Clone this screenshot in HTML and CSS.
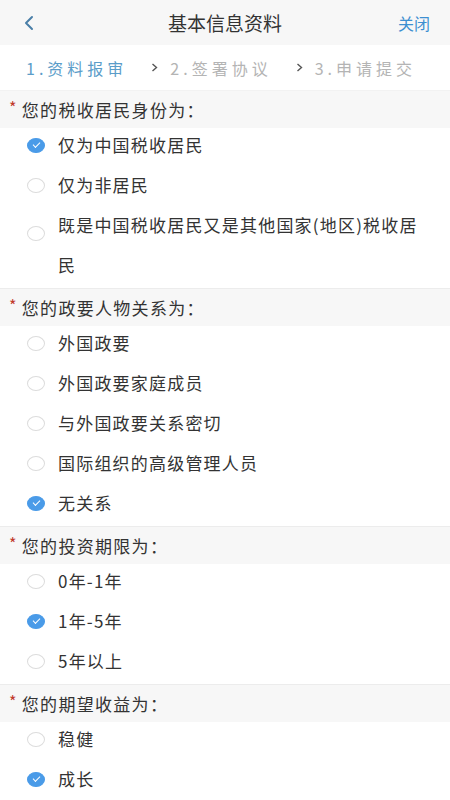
FILE: index.html
```html
<!DOCTYPE html>
<html lang="zh">
<head>
<meta charset="utf-8">
<link rel="stylesheet" href="styles.css">
</head>
<body>
<div class="nav">
  <svg class="back" width="12" height="16" viewBox="0 0 12 16"><path d="M9 2 L3 8 L9 14" fill="none" stroke="#4a7fa8" stroke-width="2" stroke-linecap="round" stroke-linejoin="round"/></svg>
  <div class="title">基本信息资料</div>
  <div class="close">关闭</div>
</div>
<div class="steps">
  <span class="step active">1.资料报审</span>
  <svg class="arrow" width="7" height="9" viewBox="0 0 7 9"><path d="M1.5 1 L5.5 4.5 L1.5 8" fill="none" stroke="#555" stroke-width="1.4"/></svg>
  <span class="step">2.签署协议</span>
  <svg class="arrow" width="7" height="9" viewBox="0 0 7 9"><path d="M1.5 1 L5.5 4.5 L1.5 8" fill="none" stroke="#555" stroke-width="1.4"/></svg>
  <span class="step">3.申请提交</span>
</div>

<div class="section">
  <div class="q"><span class="star">*</span>您的税收居民身份为：</div>
  <div class="opts">
    <div class="opt"><span class="radio on"></span><span class="txt">仅为中国税收居民</span></div>
    <div class="opt"><span class="radio"></span><span class="txt">仅为非居民</span></div>
    <div class="opt multi"><span class="radio"></span><span class="txt">既是中国税收居民又是其他国家(地区)税收居民</span></div>
  </div>
</div>

<div class="section">
  <div class="q"><span class="star">*</span>您的政要人物关系为：</div>
  <div class="opts">
    <div class="opt"><span class="radio"></span><span class="txt">外国政要</span></div>
    <div class="opt"><span class="radio"></span><span class="txt">外国政要家庭成员</span></div>
    <div class="opt"><span class="radio"></span><span class="txt">与外国政要关系密切</span></div>
    <div class="opt"><span class="radio"></span><span class="txt">国际组织的高级管理人员</span></div>
    <div class="opt"><span class="radio on"></span><span class="txt">无关系</span></div>
  </div>
</div>

<div class="section">
  <div class="q"><span class="star">*</span>您的投资期限为：</div>
  <div class="opts">
    <div class="opt"><span class="radio"></span><span class="txt">0年-1年</span></div>
    <div class="opt"><span class="radio on"></span><span class="txt">1年-5年</span></div>
    <div class="opt"><span class="radio"></span><span class="txt">5年以上</span></div>
  </div>
</div>

<div class="section">
  <div class="q"><span class="star">*</span>您的期望收益为：</div>
  <div class="opts">
    <div class="opt"><span class="radio"></span><span class="txt">稳健</span></div>
    <div class="opt"><span class="radio on"></span><span class="txt">成长</span></div>
  </div>
</div>
</body>
</html>
```

FILE: styles.css
```css
html, body {
  margin: 0;
  padding: 0;
  background: #ffffff;
  font-family: "Noto Sans CJK SC", "Noto Sans", sans-serif;
  color: #333333;
  overflow: hidden;
}
.nav {
  height: 45px;
  background: #f7f7f7;
  display: flex;
  align-items: center;
  position: relative;
  padding: 0 20px 0 23px;
}
.back {
  display: block;
}
.title {
  position: absolute;
  left: 0;
  right: 0;
  text-align: center;
  font-size: 19px;
  color: #333;
  pointer-events: none;
}
.close {
  margin-left: auto;
  font-size: 16px;
  color: #3d8fd1;
}
.steps {
  height: 45px;
  display: flex;
  align-items: center;
  padding-left: 26px;
  font-size: 16px;
  color: #b4b4b4;
  letter-spacing: 4px;
  border-bottom: 1px solid #f2f2f2;
}
.step.active {
  color: #5b9dc9;
}
.arrow {
  display: block;
  margin: 0 12px 0 24px;
}
.section {
  border-bottom: 1px solid #ececec;
}
.q {
  height: 37px;
  background: #f7f7f7;
  display: flex;
  align-items: center;
  font-size: 17px;
  letter-spacing: 1.3px;
  padding-left: 9px;
  color: #333;
}
.star {
  color: #c0392b;
  font-size: 16px;
  margin-right: 4px;
  transform: translateY(-3px);
}
.opts {
  margin-top: -3px;
  padding-bottom: 3px;
}
.opt {
  display: flex;
  align-items: flex-start;
  padding: 0 22px 0 27px;
  font-size: 17px;
  line-height: 40px;
  letter-spacing: 1.2px;
}
.radio {
  flex: none;
  width: 18px;
  height: 15px;
  border-radius: 50%;
  box-sizing: border-box;
  border: 1px solid #dcdcdc;
  background: #fff;
  margin-right: 13px;
  align-self: center;
  position: relative;
}
.opt.multi .radio {
  align-self: flex-start;
  margin-top: 21px;
}
.radio.on {
  background: #4a9be8;
  border-color: #4a9be8;
}
.radio.on::after {
  content: "";
  position: absolute;
  left: 5px;
  top: 3px;
  width: 6px;
  height: 3px;
  border-left: 1.5px solid #fff;
  border-bottom: 1.5px solid #fff;
  transform: rotate(-45deg);
}
.txt {
  flex: 1;
}
```
